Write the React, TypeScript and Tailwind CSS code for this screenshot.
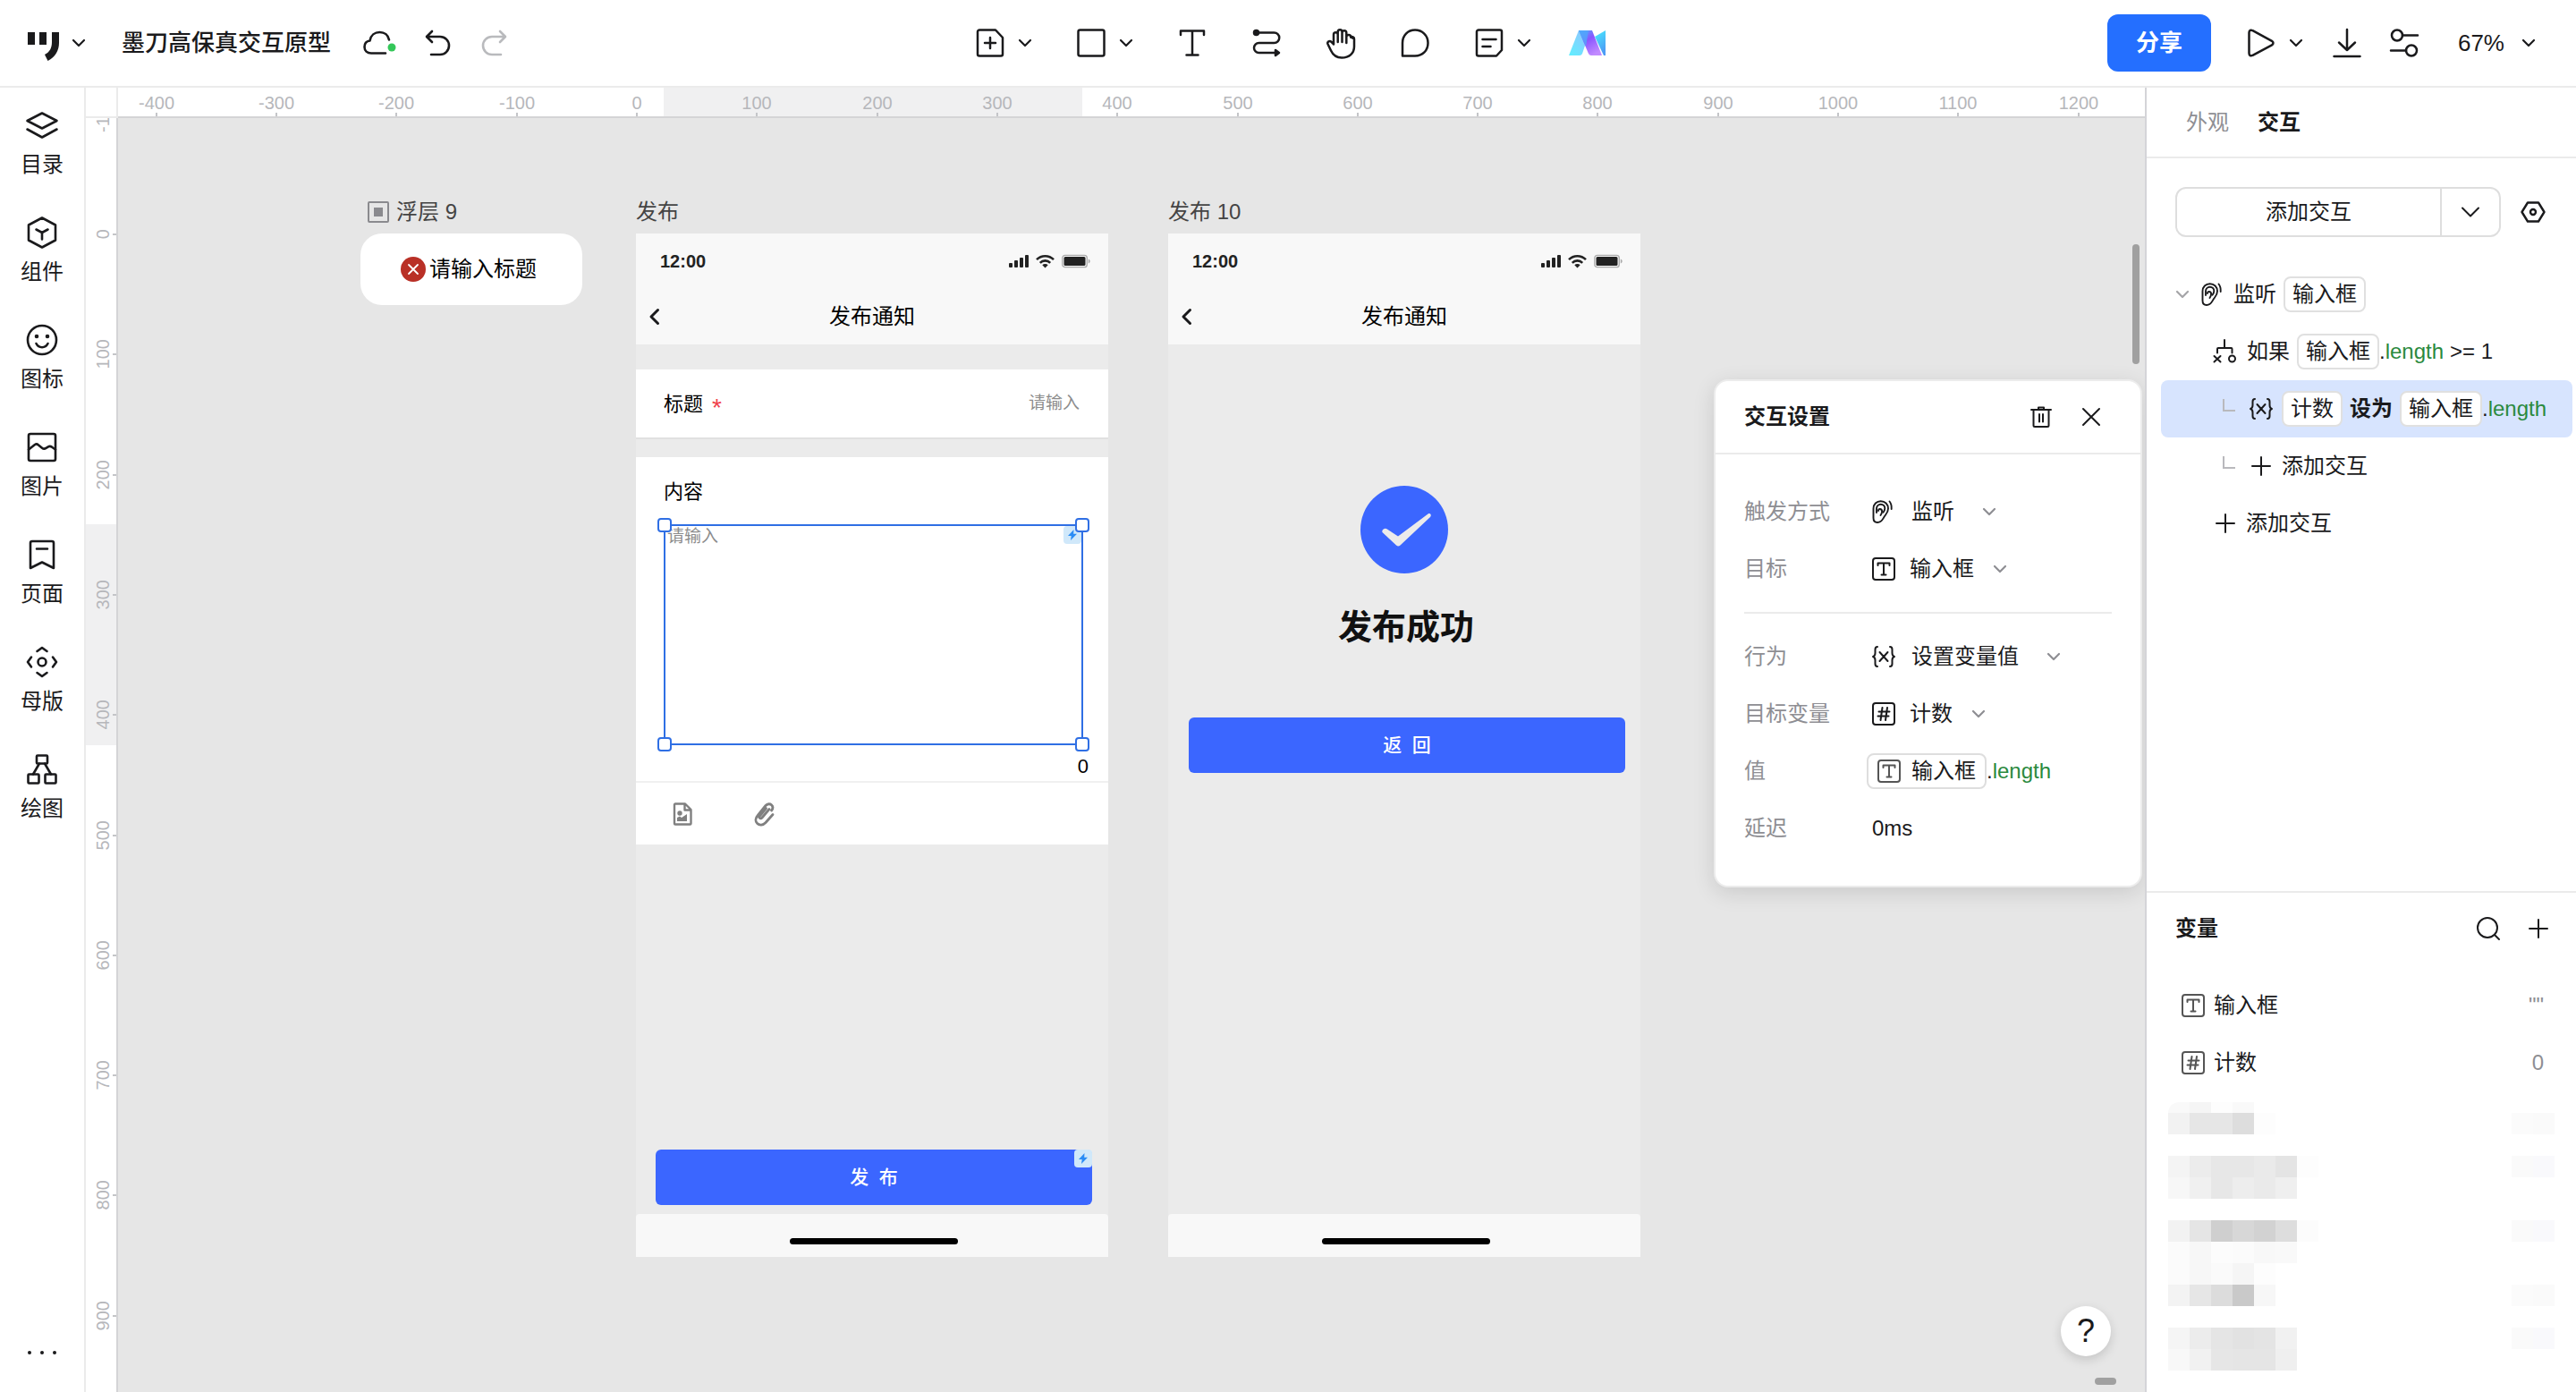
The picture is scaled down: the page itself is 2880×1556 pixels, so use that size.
import type { ReactNode } from 'react';

type IconProps = {
  className?: string;
  box?: string;
  stroke?: number;
  children: ReactNode;
};

function Icon({ className = 'size-8', box = '0 0 32 32', stroke = 2.5, children }: IconProps) {
  return (
    <svg
      className={`${className} shrink-0 overflow-visible`}
      viewBox={box}
      fill="none"
      stroke="currentColor"
      strokeWidth={stroke}
      strokeLinecap="round"
      strokeLinejoin="round"
      aria-hidden="true"
    >
      {children}
    </svg>
  );
}

function Chevron({ className = 'w-3.5 h-2', stroke = 2.2 }: { className?: string; stroke?: number }) {
  return (
    <Icon className={className} box="0 0 14 8" stroke={stroke}>
      <path d="M1 1l6 6 6-6" />
    </Icon>
  );
}

function EarIcon() {
  return (
    <Icon className="size-[26px]" box="0 0 26 26" stroke={1.9}>
      <path d="M1.500 20V9.500C1.500 4.500 5 1.200 9.700 1.200S18 4.500 18 9.500c0 4-2 5.800-4 8.500-2 3-3 7-8 7-3 0-4.500-2-4.500-5z" />
      <path d="M5 14V9.500C5 6.700 7 4.700 9.700 4.700s4.600 2 4.600 4.600c0 2-.8 3-1.800 4.400" />
      <path d="M9.500 17c1-1.300 1.600-2.500 1.600-4.200 0-1.800-.9-2.800-2.300-2.800-1.300 0-1.800 1-1.800 2" />
      <path d="M19.500 1.500c1.800 2.200 2.500 5 2.200 8.500" />
    </Icon>
  );
}

function TextVarIcon() {
  return (
    <Icon className="size-[26px]" box="0 0 26 26" stroke={2}>
      <rect x="1" y="1" width="24" height="24" rx="3" />
      <path d="M6.500 9V6.500h13V9M13 6.500v13M10.500 19.500h5" />
    </Icon>
  );
}

function NumberVarIcon() {
  return (
    <Icon className="size-[26px]" box="0 0 26 26" stroke={2}>
      <rect x="1" y="1" width="24" height="24" rx="3" />
      <path d="M11.500 6l-2 14M17 6l-2 14M7.500 10.500h12M6.500 15.500h12" />
    </Icon>
  );
}

function BracesIcon() {
  return (
    <Icon className="size-[26px]" box="0 0 26 26" stroke={2}>
      <path d="M6 2C3.500 2 3.500 3.500 3.500 5v4c0 2-.5 3.500-2.500 4 2 .5 2.500 2 2.500 4v4c0 1.500 0 3 2.500 3M20 2c2.500 0 2.500 1.500 2.500 3v4c0 2 .5 3.500 2.500 4-2 .5-2.500 2-2.500 4v4c0 1.500 0 3-2.500 3M8.500 8l9 10M17.500 8l-9 10" />
    </Icon>
  );
}

function PlusIcon({ className = 'size-[22px]' }: { className?: string }) {
  return (
    <Icon className={className} box="0 0 22 22" stroke={2}>
      <path d="M11 1v20M1 11h20" />
    </Icon>
  );
}

const sideItems: { label: string; icon: ReactNode }[] = [
  {
    label: '目录',
    icon: <path d="M18 4.500l16.500 8.500L18 21.500 1.500 13zM1.500 22.500L18 31.500l16.500-9" />,
  },
  {
    label: '组件',
    icon: <path d="M18 1.500l15 8v17l-15 8-15-8v-17zM11.500 14.500l6.500 3.500 6.500-3.500M18 18v7.500" />,
  },
  {
    label: '图标',
    icon: (
      <>
        <circle cx="18" cy="18" r="16" />
        <path d="M11.500 22c1.500 3 4 4.200 6.500 4.200s5-1.200 6.500-4.200" />
        <circle cx="12" cy="14" r="1" fill="currentColor" stroke="currentColor" />
        <circle cx="24" cy="14" r="1" fill="currentColor" stroke="currentColor" />
      </>
    ),
  },
  {
    label: '图片',
    icon: (
      <>
        <rect x="3" y="3" width="30" height="30" rx="2" />
        <path d="M3 20.500l7-5.500c1.500-1 2.500-.8 4 .4l4 3.300c1.500 1.200 3 1.200 4.500.2l2.500-1.500c1.300-.8 2.500-.7 4 .3L33 20.500" />
      </>
    ),
  },
  {
    label: '页面',
    icon: <path d="M7 3h22a2 2 0 0 1 2 2v28l-13-6.500L5 33V5a2 2 0 0 1 2-2zM12 11.500h12" />,
  },
  {
    label: '母版',
    icon: (
      <>
        <circle cx="18" cy="18" r="4.500" />
        <path d="M12.500 6L18 2l5.500 4M12.500 30l5.500 4 5.500-4M6 12.500L2 18l4 5.500M30 12.500l4 5.500-4 5.500" />
      </>
    ),
  },
  {
    label: '绘图',
    icon: (
      <>
        <rect x="12" y="2.500" width="12" height="9" rx="1" />
        <rect x="2.500" y="23.500" width="12" height="10" rx="1" />
        <rect x="21.500" y="23.500" width="12" height="10" rx="1" />
        <path d="M15 11.500l-7 12M21 11.500l7 12" />
      </>
    ),
  },
];

function ToolButton({
  label,
  menu = false,
  className = '',
  children,
}: {
  label: string;
  menu?: boolean;
  className?: string;
  children: ReactNode;
}) {
  return (
    <button type="button" aria-label={label} className={`flex items-center gap-4 ${className}`}>
      {children}
      {menu && <Chevron />}
    </button>
  );
}

function Header() {
  return (
    <header className="grid h-[98px] shrink-0 grid-cols-[1fr_auto_1fr] items-center border-b-2 border-[#ebebeb] bg-white">
      <div className="flex items-center pl-[31px]">
        <button type="button" aria-label="菜单" className="flex items-center gap-[15px]">
          <svg className="mt-2 h-8 w-[35px]" viewBox="0 0 35 32" fill="currentColor" aria-hidden="true">
            <path d="M0 0h8v14H0zM13 0h8v14h-8zM27 0h8v12c0 8-4 16-12.500 20L19 25c6-3 8-8 8-14z" />
          </svg>
          <Chevron />
        </button>
        <h1 className="ml-[41px] text-[26px] leading-10 font-medium">墨刀高保真交互原型</h1>
        <div className="ml-9 flex items-center gap-[30px]">
          <button type="button" aria-label="已同步">
            <Icon className="h-7 w-[38px]" box="0 0 38 28" stroke={2.6}>
              <path d="M25 25.500H9C4.500 25.500 1.500 22.500 1.500 18.500c0-4 2.500-6.500 6-7C8.500 5.500 13 2 18.500 2 24 2 28 5.500 29 10.500" />
              <circle cx="32" cy="19" r="4.500" fill="#34c759" stroke="none" />
            </Icon>
          </button>
          <button type="button" aria-label="撤销">
            <Icon className="size-8" stroke={2.6}>
              <path d="M9 3L3 9l6 6M3.500 9H18a10 10 0 0 1 0 20H8" />
            </Icon>
          </button>
          <button type="button" aria-label="重做" className="text-[#b9babd]">
            <Icon className="size-8" stroke={2.6}>
              <path d="M23 3l6 6-6 6M28.500 9H14a10 10 0 0 0 0 20h10" />
            </Icon>
          </button>
        </div>
      </div>

      <nav aria-label="工具" className="flex items-center gap-[51px] pl-1.5">
        <ToolButton label="新建页面" menu>
          <Icon>
            <path d="M4 1.500h18l8 8.500v18.500a2 2 0 0 1-2 2H4a2 2 0 0 1-2-2v-25a2 2 0 0 1 2-2zM16 10v12M10 16h12" />
          </Icon>
        </ToolButton>
        <ToolButton label="矩形" menu>
          <Icon>
            <rect x="1.500" y="1.500" width="29" height="29" rx="2" />
          </Icon>
        </ToolButton>
        <ToolButton label="文本">
          <Icon>
            <path d="M3 7V2.500h26V7M16 2.500v27M9.500 29.500h13" />
          </Icon>
        </ToolButton>
        <ToolButton label="连线">
          <Icon>
            <circle cx="4.500" cy="4.500" r="2.500" fill="currentColor" />
            <path d="M5 4.500h19.500a5.700 5.700 0 0 1 0 11.500h-17a5.500 5.500 0 0 0 0 11H28M26 24l4 3-4 3z" />
          </Icon>
        </ToolButton>
        <ToolButton label="抓手">
          <Icon>
            <path d="M8 17.500V6.700a2.300 2.300 0 0 1 4.700 0V15 3.700a2.400 2.400 0 0 1 4.800 0V15 4.700a2.400 2.400 0 0 1 4.800 0V16 10.500M22.300 16V9.500a2.400 2.400 0 0 1 4.900 0L31 11.500M8 17.500l-2.500-2.700c-2-2-5 0-4 2.500L5 24.500c2.300 5 5.500 8 12 8 8.500 0 14-5 14-12.500V11.500a2.300 2.300 0 0 0-3.800-1.800" />
          </Icon>
        </ToolButton>
        <ToolButton label="评论">
          <Icon>
            <path d="M2 30.500V16C2 7.500 8 1.500 16 1.500S30.500 7.500 30.500 16 24.500 30.500 16 30.500z" />
          </Icon>
        </ToolButton>
        <ToolButton label="便签" menu>
          <Icon>
            <path d="M4 1.500h24a2 2 0 0 1 2 2V24l-6 6.500H4a2 2 0 0 1-2-2v-25a2 2 0 0 1 2-2zM8.500 12h15M8.500 20h9" />
          </Icon>
        </ToolButton>
        <ToolButton label="AI" className="-ml-2">
          <svg className="h-7 w-[42px]" viewBox="0 0 42 28" aria-hidden="true">
            <defs>
              <linearGradient id="leg" x1="0" y1="1" x2="0.7" y2="0">
                <stop offset="0" stopColor="#5ff0ff" />
                <stop offset="1" stopColor="#8fc8ff" />
              </linearGradient>
              <linearGradient id="mid" x1="0" y1="0" x2="0.6" y2="1">
                <stop offset="0" stopColor="#4db4ff" />
                <stop offset="0.45" stopColor="#8a55ff" />
                <stop offset="1" stopColor="#c18bff" />
              </linearGradient>
              <linearGradient id="side" x1="0" y1="0" x2="0.4" y2="1">
                <stop offset="0" stopColor="#48efff" />
                <stop offset="1" stopColor="#4d9cf5" />
              </linearGradient>
            </defs>
            <path d="M11 0h9l-1 14-4 12q-1 2-3 2H0z" fill="url(#leg)" />
            <path d="M11 0h15l11 28H25q-2 0-3-2z" fill="url(#mid)" />
            <path d="M29 7l12-7v28h-2z" fill="url(#side)" />
            <path d="M11 0h11l-3 18z" fill="#4fa8fb" opacity="0.8" />
          </svg>
        </ToolButton>
      </nav>

      <div className="flex items-center justify-end pr-[46px]">
        <button type="button" className="h-16 w-[116px] rounded-xl bg-[#246fff] text-[26px] font-bold text-white">
          分享
        </button>
        <div className="ml-10 flex items-center gap-[34px]">
          <ToolButton label="预览" menu>
            <Icon>
              <path d="M2.500 4.500v23c0 2.500 2 3.500 4 2.300l21.500-11.500c2-1.100 2-3.300 0-4.400L6.500 2.200C4.500 1 2.500 2 2.500 4.500z" />
            </Icon>
          </ToolButton>
          <ToolButton label="下载">
            <Icon>
              <path d="M16 1v23M7 15.500l9 8.500 9-8.500M1.500 31h29" />
            </Icon>
          </ToolButton>
          <ToolButton label="设置" className="-ml-0.5">
            <Icon>
              <circle cx="8" cy="7.500" r="6" />
              <circle cx="24" cy="24.500" r="6" />
              <path d="M14 7.500h17M1 24.500h17" />
            </Icon>
          </ToolButton>
        </div>
        <button type="button" className="ml-11 flex items-center gap-5 text-[26px]">
          67%
          <Chevron />
        </button>
      </div>
    </header>
  );
}

function Sidebar() {
  return (
    <aside className="flex w-24 shrink-0 flex-col items-center border-r-2 border-[#ebebeb] bg-white pt-6">
      <nav aria-label="资源" className="flex flex-col gap-10">
        {sideItems.map((item) => (
          <button key={item.label} type="button" className="flex h-20 flex-col items-center gap-2">
            <Icon className="size-9" box="0 0 36 36" stroke={2.6}>
              {item.icon}
            </Icon>
            <span className="text-2xl leading-9">{item.label}</span>
          </button>
        ))}
      </nav>
      <button type="button" aria-label="更多" className="mt-auto mb-[42px] flex gap-2.5">
        <span className="size-1 rounded-full bg-current" />
        <span className="size-1 rounded-full bg-current" />
        <span className="size-1 rounded-full bg-current" />
      </button>
    </aside>
  );
}

// Pixels on screen between two ruler labels (100 units at 67%)
const STEP = 134.3;
const H_MARKS = [-400, -300, -200, -100, 0, 100, 200, 300, 400, 500, 600, 700, 800, 900, 1000, 1100, 1200];
const V_MARKS = [-100, 0, 100, 200, 300, 400, 500, 600, 700, 800, 900];

function HorizontalRuler() {
  return (
    <div className="relative h-[34px] overflow-hidden border-b-2 border-[#d4d4d6] bg-white text-xl text-[#b6b7bb]">
      <div className="absolute inset-y-0 left-[610px] w-[468px] bg-[#f0f0f1]" />
      {H_MARKS.map((mark) => (
        <div
          key={mark}
          className="absolute inset-y-0 flex w-20 -translate-x-1/2 flex-col items-center justify-between"
          style={{ left: 580 + Math.round((mark / 100) * STEP) }}
        >
          <span className="pt-1.5 leading-[22px]">{mark}</span>
          <span className="h-1 w-0.5 bg-[#c4c5c8]" />
        </div>
      ))}
    </div>
  );
}

function VerticalRuler() {
  return (
    <div className="relative overflow-hidden border-r-2 border-[#d4d4d6] bg-white text-xl text-[#b6b7bb]">
      <div className="absolute inset-x-0 top-[454px] h-[247px] bg-[#f0f0f1]" />
      {V_MARKS.map((mark) => (
        <div
          key={mark}
          className="absolute inset-x-0 flex h-20 -translate-y-1/2 items-center justify-between"
          style={{ top: 130 + Math.round((mark / 100) * STEP) }}
        >
          <span className="rotate-180 pr-2 leading-[22px] [writing-mode:vertical-rl]">{mark}</span>
          <span className="h-0.5 w-1 bg-[#c4c5c8]" />
        </div>
      ))}
    </div>
  );
}

function PhoneHeader() {
  return (
    <div className="h-[124px] bg-[#f8f8f8]">
      <div className="flex h-[62px] items-center justify-between pr-5 pl-[27px] text-[#222]">
        <span className="text-xl font-bold">12:00</span>
        <div className="flex items-center gap-2">
          <svg className="h-4 w-[22px]" viewBox="0 0 22 16" fill="currentColor" aria-hidden="true">
            <rect x="0" y="10" width="4" height="5" rx="1" />
            <rect x="6" y="7" width="4" height="8" rx="1" />
            <rect x="12" y="4" width="4" height="11" rx="1" />
            <rect x="18" y="1" width="4" height="14" rx="1" />
          </svg>
          <Icon className="h-4 w-[21px]" box="0 0 21 16" stroke={2.6}>
            <g strokeLinecap="butt">
              <path d="M1 6.200a13.500 13.500 0 0 1 19 0M4.800 9.800a8 8 0 0 1 11.400 0" />
              <path d="M7.300 12.200a4.600 4.600 0 0 1 6.400 0L10.500 15.500z" fill="currentColor" stroke="none" />
            </g>
          </Icon>
          <svg className="h-4 w-8" viewBox="0 0 32 16" aria-hidden="true">
            <rect x="0.800" y="1.300" width="27.500" height="13.400" rx="3" fill="none" stroke="#aaa" strokeWidth="1.300" />
            <rect x="2.500" y="3" width="24" height="10" rx="1.500" fill="#222" />
            <path d="M29.800 5.500c2.500 1 2.500 4 0 5z" fill="#aaa" />
          </svg>
        </div>
      </div>
      <div className="grid h-[62px] grid-cols-[1fr_auto_1fr] items-center px-[15px]">
        <button type="button" aria-label="返回上页">
          <Icon className="h-[18px] w-[11px]" box="0 0 11 18" stroke={3}>
            <path d="M9.500 1.500L2 9l7.500 7.500" />
          </Icon>
        </button>
        <h2 className="text-2xl font-normal text-black">发布通知</h2>
      </div>
    </div>
  );
}

function HomeBar() {
  return (
    <div className="mt-auto flex h-12 items-end justify-center rounded-t bg-[#f8f8f8] pb-3.5 pl-1">
      <div className="h-[7px] w-[188px] rounded-full bg-black" />
    </div>
  );
}

function Bolt({ className }: { className: string }) {
  return (
    <span className={`absolute flex size-5 items-center justify-center rounded-sm bg-[#d0e8fa] text-[#2a8cf5] ${className}`}>
      <svg className="h-3 w-2.5" viewBox="0 0 10 12" fill="currentColor" aria-hidden="true">
        <path d="M6.500 0L0 7h3.700L3 12l7-7.200H6.200z" />
      </svg>
    </span>
  );
}

function SelectionHandles() {
  const base = 'pointer-events-none absolute size-4 rounded-[4px] border-2 border-[#2f6fe4] bg-white';
  return (
    <>
      <span className={`${base} -top-[9px] -left-[9px]`} />
      <span className={`${base} -top-[9px] -right-[9px]`} />
      <span className={`${base} -bottom-[9px] -left-[9px]`} />
      <span className={`${base} -right-[9px] -bottom-[9px]`} />
    </>
  );
}

function Overlay() {
  return (
    <section className="absolute top-[89px] left-[271px] w-[248px]">
      <div className="flex h-10 items-start gap-2 pl-2 text-2xl leading-8 text-[#444]">
        <Icon className="mt-1 size-6 text-[#8a8a8e]" box="0 0 24 24" stroke={2}>
          <rect x="1" y="1" width="22" height="22" rx="1" />
          <rect x="7" y="7" width="10" height="10" fill="currentColor" stroke="none" />
        </Icon>
        浮层 9
      </div>
      <div className="flex h-20 items-center justify-center gap-1 rounded-3xl bg-white pr-1.5 text-2xl text-black">
        <Icon className="size-7" box="0 0 28 28" stroke={1.8}>
          <circle cx="14" cy="14" r="14" fill="#b93026" stroke="none" />
          <path d="M9 9l10 10M19 9L9 19" stroke="#fff" />
        </Icon>
        请输入标题
      </div>
    </section>
  );
}

function PublishBoard() {
  return (
    <section className="absolute top-[89px] left-[579px] w-[528px]">
      <div className="h-10 text-2xl leading-8 text-[#444]">发布</div>
      <div className="flex h-[1144px] flex-col bg-[#ebebeb]">
        <PhoneHeader />
        <div className="mt-7 flex h-[78px] items-center border-b-2 border-[#e0e0e0] bg-white pr-8 pl-[31px]">
          <label htmlFor="post-title" className="flex items-center text-[22px] text-black">
            标题
            <span className="pt-2.5 pl-2.5 text-[28px] leading-none text-[#f0414c]">*</span>
          </label>
          <input
            id="post-title"
            placeholder="请输入"
            className="min-w-0 flex-1 text-right text-[19px] outline-none placeholder:text-[#8c8c8c]"
          />
        </div>
        <div className="mt-5 flex h-[433px] flex-col bg-white">
          <label htmlFor="post-body" className="px-[31px] pt-[23px] text-[22px] leading-8 text-black">
            内容
          </label>
          <div className="relative mt-5 mr-7 ml-[31px] h-[247px] border-2 border-[#2f6fe4]">
            <textarea
              id="post-body"
              placeholder="请输入"
              className="block h-full w-full resize-none px-0.5 text-[19px] leading-6 outline-none placeholder:text-[#8c8c8c]"
            />
            <Bolt className="top-0 right-0" />
            <SelectionHandles />
          </div>
          <output className="mt-2 pr-[22px] text-right text-[22px] leading-8 text-black">0</output>
          <div className="mt-auto flex h-[71px] items-center gap-[68px] border-t-2 border-[#f0f0f0] pl-[41px] text-[#808080]">
            <button type="button" aria-label="添加图片">
              <Icon className="h-[26px] w-[22px]" box="0 0 22 26" stroke={2.4}>
                <path d="M3 1.500h11L20.500 8v15.500a1 1 0 0 1-1 1H3a1 1 0 0 1-1-1v-21a1 1 0 0 1 1-1zM13.500 1.500V8.500h7" />
                <circle cx="8" cy="12" r="1.500" fill="currentColor" />
                <path d="M5 21v-4l3-1.500 2 1.500 6-4v8z" fill="currentColor" stroke="none" />
              </Icon>
            </button>
            <button type="button" aria-label="添加附件">
              <Icon className="size-[26px]" box="0 0 26 26" stroke={2.8}>
                <path d="M18 7.500L10 17c-1.800 2-4 0-2.500-2L14.500 6.500M22 13.500L14 22.500c-3 3.200-7 3.200-9.300 1-2.500-2.300-2.200-6 .3-8.800L14 3.500c2-2.200 5-2.200 6.500-.8 1.700 1.600 1.700 4.200 0 6.300" />
              </Icon>
            </button>
          </div>
        </div>
        <button
          type="button"
          className="relative mt-[341px] ml-[22px] h-[62px] w-[488px] rounded-md bg-[#3b66ff] text-[21px] font-medium whitespace-pre text-white"
        >
          发{'  '}布
          <Bolt className="top-0 right-0" />
        </button>
        <HomeBar />
      </div>
    </section>
  );
}

function SuccessBoard() {
  return (
    <section className="absolute top-[89px] left-[1174px] w-[528px]">
      <div className="h-10 text-2xl leading-8 text-[#444]">发布 10</div>
      <div className="flex h-[1144px] flex-col bg-[#ebebeb]">
        <PhoneHeader />
        <Icon className="mt-[158px] size-[98px] self-center" box="0 0 98 98" stroke={0}>
          <circle cx="49" cy="49" r="49" fill="#3b66ff" />
          <path d="M24.500 50c1-2 3-3 5-1.800L42 56.500 75.500 31.500c2.500-1.500 4.500 1.500 2.500 3.500L44.500 66.500c-1.500 1.300-3 1.300-4.500 0L25 52.500c-.8-.8-.9-1.600-.5-2.500z" fill="#ebebeb" stroke="none" />
        </Icon>
        <p className="mt-8 self-center pl-1 text-[38px] leading-[56px] font-bold text-[#111]">发布成功</p>
        <button
          type="button"
          className="mt-[73px] ml-[23px] h-[62px] w-[488px] rounded-md bg-[#3b66ff] text-[21px] font-medium whitespace-pre text-white"
        >
          返{'  '}回
        </button>
        <HomeBar />
      </div>
    </section>
  );
}

function DialogRow({ id, label, children }: { id?: string; label: string; children: ReactNode }) {
  return (
    <div className="flex h-16 items-center">
      <label htmlFor={id} className="w-[143px] text-[#8e8e93]">
        {label}
      </label>
      {children}
    </div>
  );
}

function DialogSelect({ id, icon, value, wide = false }: { id: string; icon: ReactNode; value: string; wide?: boolean }) {
  return (
    <div className="flex items-center">
      {icon}
      <select id={id} className={`appearance-none text-[#1a1a1c] outline-none ${wide ? 'mr-8 ml-[18px]' : 'mr-[22px] ml-4'}`}>
        <option>{value}</option>
      </select>
      <span className="text-[#8e8e93]">
        <Chevron />
      </span>
    </div>
  );
}

function SettingsDialog() {
  return (
    <section
      role="dialog"
      aria-labelledby="dialog-title"
      className="absolute top-[292px] right-[3px] w-[479px] rounded-2xl border-2 border-[#ececec] bg-white pb-8 text-2xl shadow-[0_6px_24px_rgba(0,0,0,0.12)]"
    >
      <div className="flex h-[82px] items-center border-b-2 border-[#ebebeb] pr-[45px] pl-8">
        <h2 id="dialog-title" className="flex-1 font-bold">
          交互设置
        </h2>
        <button type="button" aria-label="删除">
          <Icon className="size-6" box="0 0 24 24" stroke={2}>
            <path d="M1 4h22M9 3.500V1.500h6v2M3.500 4v17.500a1.500 1.500 0 0 0 1.500 1.500h14a1.500 1.500 0 0 0 1.500-1.500V4M10 9v8.500M14 9v8.500" />
          </Icon>
        </button>
        <button type="button" aria-label="关闭" className="ml-[34px]">
          <Icon className="size-5" box="0 0 20 20" stroke={2}>
            <path d="M1 1l18 18M19 1L1 19" />
          </Icon>
        </button>
      </div>
      <div className="px-8 pt-8">
        <DialogRow id="trigger" label="触发方式">
          <DialogSelect id="trigger" icon={<EarIcon />} value="监听" wide />
        </DialogRow>
        <DialogRow id="target" label="目标">
          <DialogSelect id="target" icon={<TextVarIcon />} value="输入框" />
        </DialogRow>
        <hr className="my-4 border-t-2 border-[#ebebeb]" />
        <DialogRow id="action" label="行为">
          <DialogSelect id="action" icon={<BracesIcon />} value="设置变量值" wide />
        </DialogRow>
        <DialogRow id="variable" label="目标变量">
          <DialogSelect id="variable" icon={<NumberVarIcon />} value="计数" />
        </DialogRow>
        <DialogRow label="值">
          <span className="-ml-1.5 flex h-10 items-center gap-3 rounded-lg border-2 border-[#dedede] px-2.5">
            <span className="text-[#555]">
              <TextVarIcon />
            </span>
            输入框
          </span>
          <Length />
        </DialogRow>
        <DialogRow id="delay" label="延迟">
          <input id="delay" defaultValue="0ms" className="w-32 outline-none" />
        </DialogRow>
      </div>
    </section>
  );
}

function Length() {
  return (
    <span>
      .<span className="text-[#2b8a3e]">length</span>
    </span>
  );
}

function Chip({ children }: { children: ReactNode }) {
  return <span className="flex h-10 items-center rounded-lg border-2 border-[#e0e0e0] bg-white px-2">{children}</span>;
}

function Elbow() {
  return <span className="mb-2 block size-3.5 border-b-2 border-l-2 border-[#b9b9bd]" />;
}

function InteractionTree() {
  return (
    <ul className="mt-8 pr-1 pl-4 text-2xl">
      <li className="flex h-16 items-center pl-[17px]">
        <button type="button" aria-label="折叠" className="text-[#a5a5a8]">
          <Chevron />
        </button>
        <span className="ml-3.5 flex w-9">
          <EarIcon />
        </span>
        监听
        <span className="ml-2">
          <Chip>输入框</Chip>
        </span>
      </li>
      <li className="flex h-16 items-center pl-[58px]">
        <span className="flex w-[38px]">
          <Icon className="size-[26px]" box="0 0 26 26" stroke={2}>
            <path d="M13 0v9M5 14.500V10a1 1 0 0 1 1-1h14.500a1 1 0 0 1 1 1v4.500M1.500 18l7 6.500M8.500 18l-7 6.500" />
            <circle cx="21.500" cy="21" r="3.500" />
          </Icon>
        </span>
        如果
        <span className="ml-2">
          <Chip>输入框</Chip>
        </span>
        <Length />
        <span className="pl-[7px]">&gt;= 1</span>
      </li>
      <li className="flex h-16 items-center rounded-lg bg-[#d7e4fe] pl-[69px]">
        <Elbow />
        <span className="mr-2.5 ml-4">
          <BracesIcon />
        </span>
        <Chip>计数</Chip>
        <strong className="mx-2">设为</strong>
        <Chip>输入框</Chip>
        <Length />
      </li>
      <li className="flex h-16 items-center pl-[69px]">
        <Elbow />
        <button type="button" className="ml-[18px] flex items-center gap-3">
          <PlusIcon />
          添加交互
        </button>
      </li>
      <li className="flex h-16 items-center pl-[61px]">
        <button type="button" className="flex items-center gap-3">
          <PlusIcon />
          添加交互
        </button>
      </li>
    </ul>
  );
}

// Censored variable names: left cells, then the two cells at the right edge
const mosaic: { left: string[]; right?: string[] }[] = [
  { left: ['#f2f2f2', '#e6e6e6', '#e6e6e6', '#dddddd', '#fdfdfd'], right: ['#fbfbfb', '#fafafa'] },
  { left: [] },
  { left: ['#f4f4f4', '#ececec', '#e7e7e7', '#e7e7e7', '#eaeaea', '#e4e4e4', '#fdfdfd'], right: ['#fafafa', '#f9f9fc'] },
  { left: ['#f7f7f7', '#f0f0f0', '#e7e7e7', '#ededed', '#eaeaea', '#efefef'] },
  { left: [] },
  { left: ['#f2f2f2', '#e5e5e5', '#cfcfcf', '#d7d7d7', '#d2d2d2', '#dddddd', '#fcfcfc'], right: ['#fafafa', '#f9f9fc'] },
  { left: ['#fbfbfb', '#f7f7f7', '#fcfcfc', '#fbfbfb', '#f8f8f8', '#f9f9f9'] },
  { left: ['#fbfbfb', '#f7f7f7', '#fafafa', '#f5f5f5', '#fdfdfd'] },
  { left: ['#f3f3f3', '#e6e6e6', '#dcdcdc', '#c9c9c9', '#f7f7f7'], right: ['#fbfbfb', '#fafafa'] },
  { left: [] },
  { left: ['#f5f5f5', '#ececec', '#e5e5e5', '#e2e2e2', '#e4e4e4', '#f1f1f1'], right: ['#fafafa', '#f9f9fc'] },
  { left: ['#f8f8f8', '#f1f1f1', '#e6e6e6', '#e5e5e5', '#e5e5e5', '#efefef'] },
];

function Mosaic() {
  return (
    <div className="mt-3 px-6" aria-hidden="true">
      <div className="flex h-3">
        <span className="w-6 rounded-tl-xl bg-[#f9f9f9]" />
        <span className="w-6 bg-[#f5f5f5]" />
        <span className="w-6 bg-[#fdfdfd]" />
        <span className="w-6 bg-[#f9f9f9]" />
      </div>
      {mosaic.map((row, i) => (
        <div key={i} className="flex h-6 justify-between">
          <div className="flex">
            {row.left.map((color, j) => (
              <span key={j} className="w-6" style={{ backgroundColor: color }} />
            ))}
          </div>
          <div className="flex">
            {row.right?.map((color, j) => (
              <span key={j} className="w-6" style={{ backgroundColor: color }} />
            ))}
          </div>
        </div>
      ))}
    </div>
  );
}

function Inspector() {
  return (
    <aside className="flex w-[482px] shrink-0 flex-col border-l-2 border-[#d4d4d8] bg-white">
      <div role="tablist" className="flex h-[79px] shrink-0 items-center gap-8 border-b-2 border-[#ebebeb] px-11 text-2xl">
        <button type="button" role="tab" aria-selected="false" className="text-[#8e8e93]">
          外观
        </button>
        <button type="button" role="tab" aria-selected="true" className="font-bold">
          交互
        </button>
      </div>
      <div className="flex-1">
        <div className="mt-8 flex items-center justify-between pr-[34px] pl-8">
          <div className="flex h-14 w-[364px] rounded-xl border-2 border-[#dedede] text-2xl">
            <button type="button" className="flex-1">
              添加交互
            </button>
            <button type="button" aria-label="更多交互" className="flex w-[66px] items-center justify-center border-l-2 border-[#dedede]">
              <Chevron className="h-3 w-[22px]" stroke={1.3} />
            </button>
          </div>
          <button type="button" aria-label="交互选项">
            <Icon className="h-6 w-7" box="0 0 28 24" stroke={2.4}>
              <path d="M8 1.500h12L26.500 12 20 22.500H8L1.500 12z" />
              <circle cx="14" cy="12" r="3" />
            </Icon>
          </button>
        </div>
        <InteractionTree />
      </div>
      <section className="h-[560px] shrink-0 border-t-2 border-[#ebebeb]">
        <div className="flex h-20 items-center pr-[31px] pl-8">
          <h2 className="flex-1 text-2xl font-bold">变量</h2>
          <button type="button" aria-label="搜索变量">
            <Icon className="size-[26px]" box="0 0 26 26" stroke={2}>
              <circle cx="12" cy="12" r="11" />
              <path d="M20 20l5 5" />
            </Icon>
          </button>
          <button type="button" aria-label="新建变量" className="ml-8">
            <PlusIcon />
          </button>
        </div>
        <ul className="mt-3.5 pr-9 pl-[39px] text-2xl">
          <li className="flex h-16 items-center">
            <span className="text-[#555]">
              <TextVarIcon />
            </span>
            <span className="flex-1 pl-2.5">输入框</span>
            <span className="text-[#8e8e93]">""</span>
          </li>
          <li className="flex h-16 items-center">
            <span className="text-[#555]">
              <NumberVarIcon />
            </span>
            <span className="flex-1 pl-2.5">计数</span>
            <span className="text-[#8e8e93]">0</span>
          </li>
        </ul>
        <Mosaic />
      </section>
    </aside>
  );
}

export default function App() {
  return (
    <div className="flex h-screen flex-col overflow-hidden bg-white font-['Liberation_Sans','Noto_Sans_CJK_SC',sans-serif] text-[#1a1a1c]">
      <Header />
      <div className="flex min-h-0 flex-1">
        <Sidebar />
        <main className="grid min-w-0 flex-1 grid-cols-[36px_1fr] grid-rows-[34px_1fr]">
          <div className="border-r-2 border-b-2 border-[#ebebeb] bg-white" />
          <HorizontalRuler />
          <VerticalRuler />
          <div className="relative overflow-hidden bg-[#e6e6e6]">
            <Overlay />
            <PublishBoard />
            <SuccessBoard />
            <div className="absolute top-[141px] right-1.5 h-[134px] w-2 rounded-full bg-[#a0a0a0]" />
            <SettingsDialog />
            <button
              type="button"
              aria-label="帮助"
              className="absolute right-[38px] bottom-10 size-14 rounded-full bg-white text-[36px] leading-none shadow-[0_4px_12px_rgba(0,0,0,0.15)]"
            >
              ?
            </button>
            <div className="absolute right-8 bottom-2 h-2 w-6 rounded-full bg-[#a0a0a0]" />
          </div>
        </main>
        <Inspector />
      </div>
    </div>
  );
}
